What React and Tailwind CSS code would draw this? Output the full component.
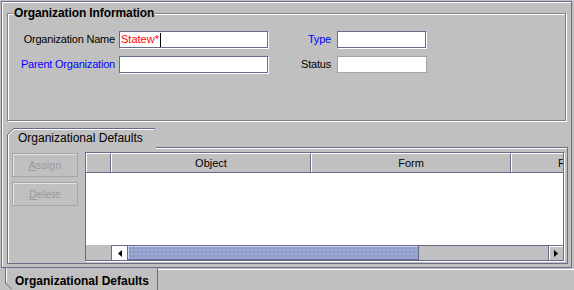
import React from 'react';

const Field = ({ width, disabled, children }) => (
  <div
    className={`h-[17px] bg-white border flex items-center pl-[1px] text-[11px] ${
      disabled ? 'border-[#a4a4a4]' : 'border-[#6a6a8a] shadow-[1px_1px_0_#fff]'
    }`}
    style={{ width }}
  >
    {children}
  </div>
);

const Label = ({ width, blue, children }) => (
  <div
    className={`text-right pr-[4px] leading-[17px] whitespace-nowrap tracking-[-0.2px] ${blue ? 'text-[#0000ff]' : 'text-black'}`}
    style={{ width }}
  >
    {children}
  </div>
);

const GroupBox = () => (
  <div className="relative w-[559px] h-[108px] border border-[#808080] shadow-[inset_1px_1px_0_#fff,1px_1px_0_#fff]">
    <div className="absolute left-[5px] top-[-8px] bg-[#c0c0c0] px-[1px] font-bold text-[12px] leading-[14px] tracking-[-0.1px]">
      Organization Information
    </div>
    <div className="pt-[17px] pl-[6px] flex flex-col gap-[8px]">
      <div className="flex">
        <Label width={105}>Organization Name</Label>
        <Field width={149}>
          <span className="text-[#ff0000]">Statew*</span>
          <span className="w-[1px] h-[14px] bg-black ml-[1px]" />
        </Field>
        <Label width={67} blue>Type</Label>
        <div className="ml-[2px]">
          <Field width={89} />
        </div>
      </div>
      <div className="flex">
        <Label width={105} blue>Parent Organization</Label>
        <Field width={149} />
        <Label width={67}>Status</Label>
        <div className="ml-[2px]">
          <Field width={90} disabled />
        </div>
      </div>
    </div>
  </div>
);

const TabShape = ({ bottom }) => (
  <svg className="absolute inset-0 w-full h-full" preserveAspectRatio="none">
    {bottom ? (
      <>
        <polyline points="0.5,0 0.5,15 6.5,21" fill="none" stroke="#6a6a8a" />
        <polyline points="1.5,0 1.5,14" fill="none" stroke="#fff" />
      </>
    ) : (
      <>
        <polyline points="0.5,19 0.5,6.5 6.5,0.5 148,0.5" fill="none" stroke="#6a6a8a" />
        <polyline points="1.5,19 1.5,7 7,1.5 147,1.5" fill="none" stroke="#fff" />
      </>
    )}
  </svg>
);

const Btn = ({ children }) => (
  <div className="w-[66px] h-[24px] border border-[#a4a4a4] shadow-[inset_1px_1px_0_#e4e4e4] flex items-center justify-center text-[#9a9a9a]">
    {children}
  </div>
);

const HeaderCell = ({ width, children, align = 'center' }) => (
  <div
    className={`h-[19px] shrink-0 border-l border-t border-white border-r border-r-[#6a6a8a] flex items-center overflow-hidden ${
      align === 'center' ? 'justify-center' : 'justify-start pl-[46px]'
    }`}
    style={{ width }}
  >
    {children}
  </div>
);

const Table = () => (
  <div className="w-[479px] h-[109px] border border-[#6a6a8a] shadow-[1px_1px_0_#fff] flex flex-col overflow-hidden">
    <div className="flex border-b border-[#6a6a8a] bg-[#c0c0c0]">
      <HeaderCell width={25} />
      <HeaderCell width={200}>Object</HeaderCell>
      <HeaderCell width={200}>Form</HeaderCell>
      <HeaderCell width={60} align="left">F</HeaderCell>
    </div>
    <div className="h-[72px] bg-white" />
    <div className="h-[15px] flex bg-[#c0c0c0]">
      <div className="w-[25px]" />
      <div className="flex-1 flex border-t border-[#6a6a8a]">
        <div className="w-[16px] bg-white border-l border-[#6a6a8a] flex items-center justify-center">
          <svg width="4" height="7" viewBox="0 0 4 7">
            <polygon points="4,0 4,7 0,3.5" fill="#000" />
          </svg>
        </div>
        <div className="w-[292px] border border-t-0 border-[#6a6a8a] bg-[#9ba7d3] bg-[radial-gradient(#6f7bb0_0.6px,transparent_0.8px)] bg-[length:4px_4px] shadow-[inset_1px_1px_0_#ccd4f0]" />
        <div className="flex-1" />
        <div className="w-[15px] border-l border-[#6a6a8a] shadow-[inset_1px_1px_0_#fff] flex items-center justify-center">
          <svg width="4" height="7" viewBox="0 0 4 7">
            <polygon points="0,0 0,7 4,3.5" fill="#000" />
          </svg>
        </div>
      </div>
    </div>
  </div>
);

export default function App() {
  return (
    <div className="w-[574px] h-[290px] bg-[#c0c0c0] overflow-hidden flex flex-col font-['Liberation_Sans',Arial,sans-serif] text-[11px] text-black">
      <div className="ml-[1px] mt-[1px] w-[571px] h-[267px] border border-[#6a6a8a] shrink-0">
        <div className="h-full border-l border-t border-white pl-[4px] pt-[10px]">
          <GroupBox />
          <div className="mt-[7px]">
            <div className="relative w-[149px] h-[19px] flex items-center pl-[11px] pt-[1px] text-[12px]">
              <TabShape />
              <span className="relative">Organizational Defaults</span>
            </div>
            <div className="w-[561px] h-[117px] border border-t-0 border-[#6a6a8a] relative">
              <div className="absolute left-[148px] right-0 top-0 h-[1px] bg-[#6a6a8a]" />
              <div className="absolute left-[148px] right-0 top-[1px] h-[1px] bg-white" />
              <div className="h-full border-l border-white flex items-start pl-[3px] pt-[6px] gap-[7px]">
                <div className="flex flex-col gap-[5px]">
                  <Btn><span><span className="underline">A</span>ssign</span></Btn>
                  <Btn><span><span className="underline">D</span>elete</span></Btn>
                </div>
                <div className="mt-[-1px]">
                  <Table />
                </div>
              </div>
            </div>
          </div>
        </div>
      </div>
      <div className="flex">
        <div className="relative ml-[5px] w-[153px] h-[22px] flex items-center pl-[10px] pt-[3px] font-bold text-[12px]">
          <TabShape bottom />
          <div className="absolute right-0 top-0 bottom-0 w-[1px] bg-[#6a6a8a]" />
          <span className="relative">Organizational Defaults</span>
        </div>
        <div className="flex-1 border-t border-white mt-[1px]" />
      </div>
    </div>
  );
}
